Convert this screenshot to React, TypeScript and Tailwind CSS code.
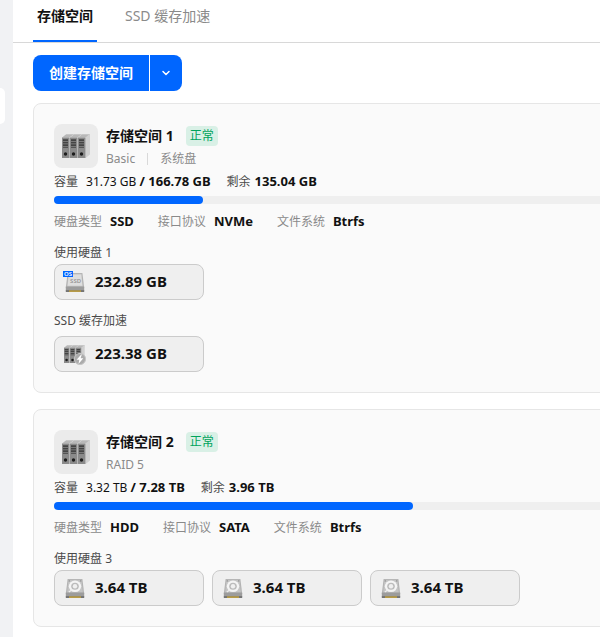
import { useState } from "react";
import { clsx } from "clsx";
import { ChevronDown } from "lucide-react";

type DiskKind = "ssd" | "cache" | "hdd";

interface Disk {
  kind: DiskKind;
  size: string;
}

interface StoragePool {
  name: string;
  status: string;
  tags: string[];
  used: string;
  total: string;
  free: string;
  percent: number;
  attrs: { label: string; value: string }[];
  disks: Disk[];
  cache?: Disk[];
}

const tabs = ["存储空间", "SSD 缓存加速"];

const pools: StoragePool[] = [
  {
    name: "存储空间 1",
    status: "正常",
    tags: ["Basic", "系统盘"],
    used: "31.73 GB",
    total: "166.78 GB",
    free: "135.04 GB",
    percent: 19,
    attrs: [
      { label: "硬盘类型", value: "SSD" },
      { label: "接口协议", value: "NVMe" },
      { label: "文件系统", value: "Btrfs" },
    ],
    disks: [{ kind: "ssd", size: "232.89 GB" }],
    cache: [{ kind: "cache", size: "223.38 GB" }],
  },
  {
    name: "存储空间 2",
    status: "正常",
    tags: ["RAID 5"],
    used: "3.32 TB",
    total: "7.28 TB",
    free: "3.96 TB",
    percent: 45.7,
    attrs: [
      { label: "硬盘类型", value: "HDD" },
      { label: "接口协议", value: "SATA" },
      { label: "文件系统", value: "Btrfs" },
    ],
    disks: [
      { kind: "hdd", size: "3.64 TB" },
      { kind: "hdd", size: "3.64 TB" },
      { kind: "hdd", size: "3.64 TB" },
    ],
  },
];

function RackShapes() {
  return (
    <>
      <path d="M23.6 3.5 28 0v20.5L23.6 24z" fill="#d0d0d0" />
      {[0, 8, 16].map((x) => (
        <g key={x} transform={`translate(${x} 0)`}>
          <path d="M0 3.5 4.5 0H12L7.6 3.5z" fill="#b8b8b8" />
          <path d="M4.5 0H12l-.6.5H3.9z" fill="#d4d4d4" />
          <rect y="3.5" width="7" height="20.5" fill="#8a8a8a" />
          <rect x="7" y="3.5" width="1" height="20.5" fill="#b4b4b4" />
          <path
            d="M1 5.2h5v1.7H1zM1 7.7h5v1.7H1zM1 10.2h5v1.7H1zM1 12.7h5v1H1z"
            fill="#444"
          />
          <circle cx="3.5" cy="20" r="1.7" fill="#1c1c1c" />
        </g>
      ))}
    </>
  );
}

function RackIcon() {
  return (
    <svg viewBox="0 0 28 24" className="h-6 w-7" aria-hidden="true">
      <RackShapes />
    </svg>
  );
}

function CacheIcon() {
  return (
    <svg viewBox="0 0 24 24" className="size-6" aria-hidden="true">
      <g transform="translate(1 3) scale(0.74 0.75)">
        <RackShapes />
      </g>
      <circle cx="17" cy="17" r="5.6" fill="#ababab" stroke="#c6c6c6" />
      <path d="m18.2 12.6-4.6 5.2h2.7l-.8 4.2 4.8-5.8h-2.7l1.2-3.6z" fill="#fff" />
    </svg>
  );
}

function DriveBody() {
  return (
    <>
      <path d="M4.6 3h14.8l1.8 15H2.8z" fill="#b2b2b2" />
      <path d="M5.4 3.8h13.2l1.2 12.6H4.2z" fill="#c4c4c4" />
      <path d="M2.8 16.6h18.4v4.2H2.8z" fill="#9c9c9c" />
      <path d="M2.8 20.4h18.4v1.4H2.8z" fill="#555" />
      <path d="M6 20.4h12v1.4H6z" fill="#c8a53c" />
    </>
  );
}

function HddIcon() {
  return (
    <svg viewBox="0 0 24 24" className="size-6" aria-hidden="true">
      <DriveBody />
      <ellipse cx="12" cy="10.3" rx="6.2" ry="5.8" fill="#f4f4f4" />
      <ellipse cx="12" cy="10.3" rx="3.8" ry="3.5" fill="#bcbcbc" />
      <circle cx="12" cy="10.3" r="2.2" fill="#f0f0f0" />
      <path d="m5.8 16 3.2-2.2" stroke="#eee" strokeWidth="1.2" />
      <circle cx="6.3" cy="4.9" r=".7" fill="#888" />
      <circle cx="17.7" cy="4.9" r=".7" fill="#888" />
    </svg>
  );
}

function SsdIcon() {
  return (
    <svg viewBox="0 0 24 24" className="size-6" aria-hidden="true">
      <DriveBody />
      <path d="M5.8 4.6h12.4l1.2 11.2H4.6z" fill="#dedede" />
      <text
        x="12.6"
        y="13"
        textAnchor="middle"
        fontSize="6"
        fontWeight="600"
        fill="#979797"
      >
        SSD
      </text>
      <rect width="10" height="6" y="1" fill="#0066ff" />
      <text
        x="5"
        y="6.2"
        textAnchor="middle"
        fontSize="6"
        fontWeight="600"
        fill="#fff"
      >
        OS
      </text>
    </svg>
  );
}

const diskIcons = { ssd: SsdIcon, cache: CacheIcon, hdd: HddIcon };

function DiskList({ disks }: { disks: Disk[] }) {
  return (
    <div className="flex gap-2">
      {disks.map((disk, i) => {
        const Icon = diskIcons[disk.kind];
        return (
          <button
            key={i}
            type="button"
            className="flex h-9 w-[150px] items-center gap-2 rounded-lg border border-[#cbcbcb] bg-[#efefef] px-2 text-[15px] leading-5 font-bold"
          >
            <Icon />
            <span className="pb-0.5">{disk.size}</span>
          </button>
        );
      })}
    </div>
  );
}

function PoolCard({ pool }: { pool: StoragePool }) {
  return (
    <section className="rounded-lg border border-[#e6e6e6] bg-[#fafafa] p-5">
      <div className="flex gap-2">
        <div className="flex size-11 items-center justify-center rounded-lg bg-[#ebebeb]">
          <RackIcon />
        </div>
        <div className="pt-0.5">
          <div className="flex items-center gap-3">
            <h2 className="text-sm leading-5 font-bold">{pool.name}</h2>
            <span className="rounded bg-[#d9f0e6] px-1 leading-5 text-[#00a35c]">
              {pool.status}
            </span>
          </div>
          <div className="mt-[7px] flex items-center text-[#8a8a8a]">
            {pool.tags.map((tag, i) => (
              <span
                key={tag}
                className={clsx(
                  "leading-3",
                  i > 0 && "ml-3 border-l border-[#d9d9d9] pl-3",
                )}
              >
                {tag}
              </span>
            ))}
          </div>
        </div>
      </div>

      <div className="mt-1 flex h-[18px] gap-4 leading-[18px]">
        <p className="flex items-baseline gap-2">
          <span className="text-[#4a4a4a]">容量</span>
          <span>
            {pool.used} <b className="text-[13px]">/ {pool.total}</b>
          </span>
        </p>
        <p className="flex items-baseline gap-1">
          <span className="text-[#4a4a4a]">剩余</span>
          <b className="text-[13px]">{pool.free}</b>
        </p>
      </div>
      <div className="mt-1.5 h-2 rounded bg-[#efefef]">
        <div
          className="h-2 rounded bg-[#0066ff]"
          style={{ width: `${pool.percent}%` }}
        />
      </div>

      <dl className="mt-2 flex h-[18px] gap-6 leading-[18px]">
        {pool.attrs.map((attr) => (
          <div key={attr.label} className="flex items-baseline gap-2">
            <dt className="text-[#8a8a8a]">{attr.label}</dt>
            <dd className="text-[13px] font-bold">{attr.value}</dd>
          </div>
        ))}
      </dl>

      <h3 className="mt-3 leading-[22px] text-[#4a4a4a]">
        使用硬盘 {pool.disks.length}
      </h3>
      <DiskList disks={pool.disks} />
      {pool.cache && (
        <>
          <h3 className="mt-2.5 mb-1 leading-[22px] text-[#4a4a4a]">
            SSD 缓存加速
          </h3>
          <DiskList disks={pool.cache} />
        </>
      )}
    </section>
  );
}

export default function App() {
  const [active, setActive] = useState(tabs[0]);

  return (
    <div className="flex min-h-screen overflow-hidden bg-white font-['Noto_Sans','Noto_Sans_CJK_SC',sans-serif] text-xs text-[#111]">
      <aside className="w-[13px] shrink-0 bg-[#f1f2f4] pt-[88px]">
        <div className="h-9 w-[5px] rounded-r-md bg-white" />
      </aside>
      <main className="min-w-[868px] flex-1">
        <nav className="flex h-[43px] gap-6 border-b border-[#d8d8d8] px-5">
          {tabs.map((tab) => (
            <button
              key={tab}
              type="button"
              onClick={() => setActive(tab)}
              className={clsx(
                "border-b-2 px-1 pb-2 text-sm",
                tab === active
                  ? "border-[#0066ff] font-bold"
                  : "border-transparent text-[#8a8a8a]",
              )}
            >
              {tab}
            </button>
          ))}
        </nav>
        <div className="px-5 py-3">
          <div className="flex h-9 text-white">
            <button
              type="button"
              className="rounded-l-lg bg-[#0066ff] px-4 text-sm font-bold"
            >
              创建存储空间
            </button>
            <button
              type="button"
              aria-label="更多"
              className="ml-px flex w-8 items-center justify-center rounded-r-lg bg-[#0066ff]"
            >
              <ChevronDown className="size-3" strokeWidth={3} />
            </button>
          </div>
          <div className="mt-3 flex flex-col gap-4">
            {pools.map((pool) => (
              <PoolCard key={pool.name} pool={pool} />
            ))}
          </div>
        </div>
      </main>
    </div>
  );
}
